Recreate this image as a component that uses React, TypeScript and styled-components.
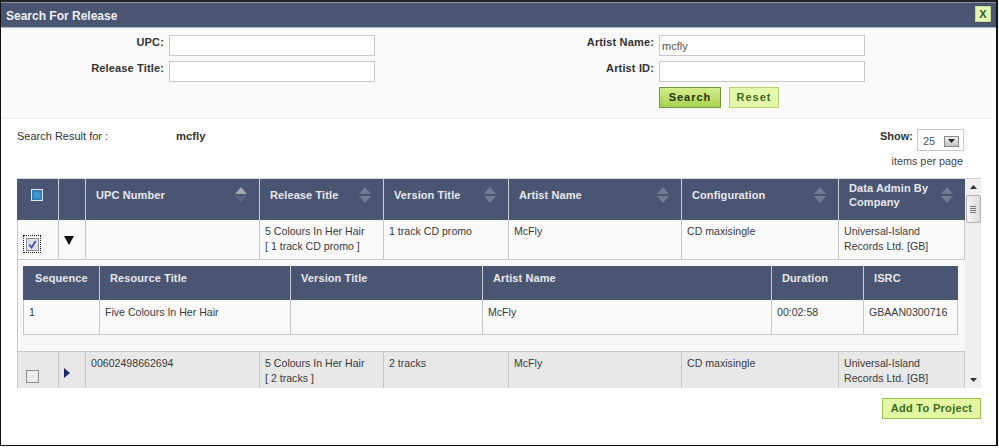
import React from 'react'
import styled, { createGlobalStyle } from 'styled-components'

type Column = { label: string, width: number, sort?: 'none' | 'asc' }

const releaseColumns: Column[] = [
  { label: 'UPC Number', width: 174, sort: 'asc' },
  { label: 'Release Title', width: 124, sort: 'none' },
  { label: 'Version Title', width: 125, sort: 'none' },
  { label: 'Artist Name', width: 173, sort: 'none' },
  { label: 'Configuration', width: 157, sort: 'none' },
  { label: 'Data Admin By Company', width: 126, sort: 'none' },
]

const resourceColumns: Column[] = [
  { label: 'Sequence', width: 77 },
  { label: 'Resource Title', width: 191 },
  { label: 'Version Title', width: 192 },
  { label: 'Artist Name', width: 289 },
  { label: 'Duration', width: 92 },
  { label: 'ISRC', width: 94 },
]

const GlobalStyle = createGlobalStyle`
  html, body {
    margin: 0;
    background: #fff;
  }
  body {
    font-family: "Liberation Sans", Arial, sans-serif;
    font-size: 11px;
    color: #333;
  }
`

const Dialog = styled.div`
  box-sizing: border-box;
  width: 998px;
  height: 446px;
  border: 1px solid #111;
  border-top: 2px solid #222;
  border-right-width: 2px;
  background: #fff;
  display: flex;
  flex-direction: column;
  overflow: hidden;
`

const TitleBar = styled.div`
  height: 26px;
  flex: none;
  box-sizing: border-box;
  border-top: 1px solid #8c93a5;
  border-bottom: 1px solid #a9b4c2;
  background: #4a5572;
  display: flex;
  align-items: center;
  justify-content: space-between;
  padding: 0 5px 0 5px;
`

const Title = styled.span`
  color: #eef0f4;
  font-size: 12px;
  font-weight: bold;
  padding-top: 1px;
`

const CloseButton = styled.button`
  width: 16px;
  height: 16px;
  margin-top: -3px;
  padding: 0;
  border: 1px solid #c4dc8a;
  background: #e6f8b4;
  color: #2f5a3a;
  font: bold 11px "Liberation Sans", Arial, sans-serif;
`

const SearchForm = styled.div`
  height: 91px;
  flex: none;
  box-sizing: border-box;
  padding-top: 7px;
  background: #fafafa;
  border-bottom: 1px solid #eeeeee;
  display: flex;
`

const FieldColumn = styled.div<{ $width: number }>`
  width: ${p => p.$width}px;
  display: flex;
  flex-direction: column;
  gap: 5px;
  align-items: flex-end;
`

const Field = styled.label`
  display: flex;
  align-items: flex-start;
  gap: 5px;
  font-size: 11px;
  font-weight: bold;
  letter-spacing: 0.15px;
  color: #333;
  line-height: 15px;
`

const TextInput = styled.input`
  box-sizing: border-box;
  width: 206px;
  height: 21px;
  padding: 2px;
  border: 1px solid #c8c8c8;
  background: #fff;
  color: #555;
  font: 11px "Liberation Sans", Arial, sans-serif;
  letter-spacing: 0;
`

const ButtonRow = styled.div`
  width: 206px;
  display: flex;
  gap: 8px;
`

const Button = styled.button<{ $primary?: boolean }>`
  box-sizing: border-box;
  height: 21px;
  padding: 0 0 2px;
  width: ${p => (p.$primary ? 62 : 50)}px;
  border: 1px solid ${p => (p.$primary ? '#6f9a3a' : '#b4d470')};
  background: ${p => (p.$primary ? 'linear-gradient(#d4ee8a, #a8d050)' : '#e4f8ac')};
  color: ${p => (p.$primary ? '#1f3a10' : '#3f6a1a')};
  font: bold 11px "Liberation Sans", Arial, sans-serif;
  letter-spacing: 1px;
`

const ResultBar = styled.div`
  height: 59px;
  flex: none;
  box-sizing: border-box;
  padding: 10px 32px 0 16px;
  display: flex;
  justify-content: space-between;
  align-items: flex-start;
`

const ResultLabel = styled.div`
  display: flex;
  font-size: 11px;
  line-height: 14px;
`

const ResultLabelText = styled.span`
  width: 159px;
`

const ResultTerm = styled.b`
  font-size: 11.3px;
  color: #333;
`

const PageSize = styled.div`
  display: flex;
  flex-direction: column;
  align-items: flex-end;
  gap: 3px;
`

const ShowRow = styled.div`
  display: flex;
  align-items: flex-start;
  gap: 4px;
  font-weight: bold;
  font-size: 11px;
  line-height: 14px;
`

const SelectBox = styled.div`
  box-sizing: border-box;
  width: 47px;
  height: 22px;
  padding: 2px 4px 0 5px;
  border: 1px solid #c8c8c8;
  display: flex;
  justify-content: space-between;
  align-items: center;
  color: #555;
  font-size: 11px;
  font-weight: normal;
`

const SelectArrow = styled.span`
  width: 15px;
  height: 11px;
  border: 1px solid #888;
  box-sizing: border-box;
  background: linear-gradient(#f0f0f0, #c4c4c4);
  display: flex;
  align-items: center;
  justify-content: center;
`

const PerPage = styled.span`
  font-size: 10.8px;
  color: #444;
  padding-right: 1px;
  line-height: 14px;
`

const Results = styled.div`
  height: 210px;
  flex: none;
  margin-left: 16px;
  width: 964px;
  display: flex;
  border-top: 1px solid #d4d4d4;
  box-sizing: border-box;
`

const ScrollBody = styled.div`
  width: 948px;
  height: 209px;
  overflow: hidden;
`

const Table = styled.table<{ $width: number }>`
  table-layout: fixed;
  width: ${p => p.$width}px;
  border-collapse: separate;
  border-spacing: 0;
`

const HeaderCell = styled.th<{ $height: number }>`
  box-sizing: border-box;
  height: ${p => p.$height}px;
  padding: 0 12px 10px 10px;
  background: #4a5572;
  color: #e6e8ee;
  font-size: 11px;
  font-weight: bold;
  text-align: left;
  line-height: 14px;
  letter-spacing: 0.1px;
  border-right: 1px solid #c8cdd6;
  &:last-child {
    border-right: 0;
  }
`

const SequenceHeader = styled(HeaderCell)`
  padding-left: 12px;
`

const HeaderContent = styled.div`
  display: flex;
  align-items: center;
  justify-content: space-between;
  gap: 4px;
`

const CheckHeaderContent = styled(HeaderContent)`
  justify-content: center;
  margin: 0 -10px;
`

const SortGlyph = styled.svg`
  flex: none;
`

const Cell = styled.td<{ $shaded?: boolean, $height?: number }>`
  box-sizing: border-box;
  height: ${p => p.$height ?? 40}px;
  padding: 4px 5px 0;
  vertical-align: top;
  background: ${p => (p.$shaded ? '#e8e8e8' : '#fafafa')};
  border-right: 1px solid #c8c8c8;
  border-bottom: 1px solid #c8c8c8;
  font-size: 10.6px;
  line-height: 15px;
  color: #3a3a3a;
  overflow: hidden;
  &:first-child {
    border-left: 1px solid #c8c8c8;
  }
`

const ControlCell = styled(Cell)`
  padding: 0;
  vertical-align: top;
`

const CheckHolder = styled.div<{ $focused?: boolean }>`
  box-sizing: border-box;
  width: 18px;
  height: 18px;
  margin: 15px 0 0 5px;
  display: flex;
  align-items: center;
  justify-content: center;
  border: 1px dotted ${p => (p.$focused ? '#111' : 'transparent')};
`

const Chevron = styled.div`
  display: flex;
  margin: 16px 0 0 5px;
`

const DetailCell = styled.td`
  box-sizing: border-box;
  padding: 6px 7px 16px 5px;
  background: #f8f8f8;
  border-bottom: 1px solid #c8c8c8;
  border-left: 1px solid #c8c8c8;
`

const ResourceCell = styled(Cell)`
  height: 35px;
  background: #fafafa;
  padding-top: 5px;
`

const ScrollTrack = styled.div`
  width: 16px;
  height: 209px;
  background: #efefef;
  display: flex;
  flex-direction: column;
  align-items: center;
`

const ScrollArrow = styled.div<{ $down?: boolean }>`
  width: 16px;
  height: ${p => (p.$down ? 17 : 16)}px;
  flex: none;
  display: flex;
  align-items: center;
  justify-content: center;
`

const ScrollThumb = styled.div`
  box-sizing: border-box;
  width: 15px;
  height: 28px;
  border: 1px solid #b4b4b4;
  border-radius: 2px;
  background: linear-gradient(90deg, #f4f4f4, #dcdcdc);
  display: flex;
  flex-direction: column;
  justify-content: center;
  align-items: center;
  gap: 1px;
`

const Grip = styled.span`
  width: 6px;
  height: 1px;
  background: #777;
`

const ScrollSpacer = styled.div`
  flex: 1;
`

const Footer = styled.div`
  display: flex;
  justify-content: flex-end;
  padding: 10px 15px 0 0;
`

const AddButton = styled.button`
  box-sizing: border-box;
  width: 99px;
  height: 21px;
  padding: 0 0 1px;
  border: 1px solid #9cc04e;
  background: #e2f7a2;
  color: #3f6a1a;
  font: bold 11px "Liberation Sans", Arial, sans-serif;
  letter-spacing: 0.3px;
`

function SortIcon({ active }: { active: boolean }) {
  return (
    <SortGlyph width="12" height="16" viewBox="0 0 12 16">
      <path d="M6 0 L12 7 H0 Z" fill={active ? '#a3a9b8' : '#727b93'} />
      <path d="M6 16 L12 9 H0 Z" fill={active ? '#5a6480' : '#727b93'} />
    </SortGlyph>
  )
}

function CheckBox({ checked }: { checked?: boolean }) {
  return (
    <svg width="13" height="13" viewBox="0 0 13 13">
      <rect x="0.5" y="0.5" width="12" height="12" fill="#e6e6ea" stroke="#8f8f8f" />
      <rect x="1.5" y="1.5" width="10" height="10" fill={checked ? '#dcdcec' : '#ececec'} />
      {checked && <path d="M3.2 6.5 L5.6 9.5 L9.6 3" fill="none" stroke="#3f4f9a" strokeWidth="1.6" />}
    </svg>
  )
}

function HeaderCheckBox() {
  return (
    <svg width="12" height="12" viewBox="0 0 12 12">
      <rect x="0.5" y="0.5" width="11" height="11" fill="#2a7ab8" stroke="#dfe6ee" />
      <rect x="2.5" y="2.5" width="7" height="7" fill="#3f94c8" />
    </svg>
  )
}

function App() {
  return (
    <>
      <GlobalStyle />
      <Dialog>
        <TitleBar>
          <Title>Search For Release</Title>
          <CloseButton>X</CloseButton>
        </TitleBar>

        <SearchForm>
          <FieldColumn $width={374}>
            <Field>UPC: <TextInput /></Field>
            <Field>Release Title: <TextInput /></Field>
          </FieldColumn>
          <FieldColumn $width={490}>
            <Field>Artist Name: <TextInput defaultValue="mcfly" /></Field>
            <Field>Artist ID: <TextInput /></Field>
            <ButtonRow>
              <Button $primary>Search</Button>
              <Button>Reset</Button>
            </ButtonRow>
          </FieldColumn>
        </SearchForm>

        <ResultBar>
          <ResultLabel>
            <ResultLabelText>Search Result for :</ResultLabelText>
            <ResultTerm>mcfly</ResultTerm>
          </ResultLabel>
          <PageSize>
            <ShowRow>
              Show:
              <SelectBox>
                25
                <SelectArrow>
                  <svg width="7" height="4" viewBox="0 0 7 4"><path d="M0 0 H7 L3.5 4 Z" fill="#222" /></svg>
                </SelectArrow>
              </SelectBox>
            </ShowRow>
            <PerPage>items per page</PerPage>
          </PageSize>
        </ResultBar>

        <Results>
          <ScrollBody>
            <Table $width={948}>
              <colgroup>
                <col width={42} />
                <col width={27} />
                {releaseColumns.map(c => <col key={c.label} width={c.width} />)}
              </colgroup>
              <thead>
                <tr>
                  <HeaderCell $height={41}>
                    <CheckHeaderContent>
                      <HeaderCheckBox />
                    </CheckHeaderContent>
                  </HeaderCell>
                  <HeaderCell $height={41} />
                  {releaseColumns.map(c => (
                    <HeaderCell key={c.label} $height={41}>
                      <HeaderContent>
                        {c.label}
                        <SortIcon active={c.sort === 'asc'} />
                      </HeaderContent>
                    </HeaderCell>
                  ))}
                </tr>
              </thead>
              <tbody>
                <tr>
                  <ControlCell>
                    <CheckHolder $focused><CheckBox checked /></CheckHolder>
                  </ControlCell>
                  <ControlCell>
                    <Chevron>
                      <svg width="10" height="9" viewBox="0 0 10 9"><path d="M0 0 H10 L5 9 Z" fill="#111" /></svg>
                    </Chevron>
                  </ControlCell>
                  <Cell />
                  <Cell>5 Colours In Her Hair<br />[ 1 track CD promo ]</Cell>
                  <Cell>1 track CD promo</Cell>
                  <Cell>McFly</Cell>
                  <Cell>CD maxisingle</Cell>
                  <Cell>Universal-Island Records Ltd. [GB]</Cell>
                </tr>
                <tr>
                  <DetailCell colSpan={8}>
                    <Table $width={935}>
                      <colgroup>
                        {resourceColumns.map(c => <col key={c.label} width={c.width} />)}
                      </colgroup>
                      <thead>
                        <tr>
                          {resourceColumns.map((c, i) => (
                            i === 0
                              ? <SequenceHeader key={c.label} $height={34}>{c.label}</SequenceHeader>
                              : <HeaderCell key={c.label} $height={34}>{c.label}</HeaderCell>
                          ))}
                        </tr>
                      </thead>
                      <tbody>
                        <tr>
                          <ResourceCell>1</ResourceCell>
                          <ResourceCell>Five Colours In Her Hair</ResourceCell>
                          <ResourceCell />
                          <ResourceCell>McFly</ResourceCell>
                          <ResourceCell>00:02:58</ResourceCell>
                          <ResourceCell>GBAAN0300716</ResourceCell>
                        </tr>
                      </tbody>
                    </Table>
                  </DetailCell>
                </tr>
                <tr>
                  <ControlCell $shaded>
                    <CheckHolder><CheckBox /></CheckHolder>
                  </ControlCell>
                  <ControlCell $shaded>
                    <Chevron>
                      <svg width="6" height="10" viewBox="0 0 6 10"><path d="M0 0 L6 5 L0 10 Z" fill="#1c2a66" /></svg>
                    </Chevron>
                  </ControlCell>
                  <Cell $shaded>00602498662694</Cell>
                  <Cell $shaded>5 Colours In Her Hair<br />[ 2 tracks ]</Cell>
                  <Cell $shaded>2 tracks</Cell>
                  <Cell $shaded>McFly</Cell>
                  <Cell $shaded>CD maxisingle</Cell>
                  <Cell $shaded>Universal-Island Records Ltd. [GB]</Cell>
                </tr>
              </tbody>
            </Table>
          </ScrollBody>
          <ScrollTrack>
            <ScrollArrow>
              <svg width="7" height="4" viewBox="0 0 7 4"><path d="M0 4 H7 L3.5 0 Z" fill="#333" /></svg>
            </ScrollArrow>
            <ScrollThumb>
              <Grip /><Grip /><Grip /><Grip />
            </ScrollThumb>
            <ScrollSpacer />
            <ScrollArrow $down>
              <svg width="7" height="4" viewBox="0 0 7 4"><path d="M0 0 H7 L3.5 4 Z" fill="#333" /></svg>
            </ScrollArrow>
          </ScrollTrack>
        </Results>

        <Footer>
          <AddButton>Add To Project</AddButton>
        </Footer>
      </Dialog>
    </>
  )
}

export default App
